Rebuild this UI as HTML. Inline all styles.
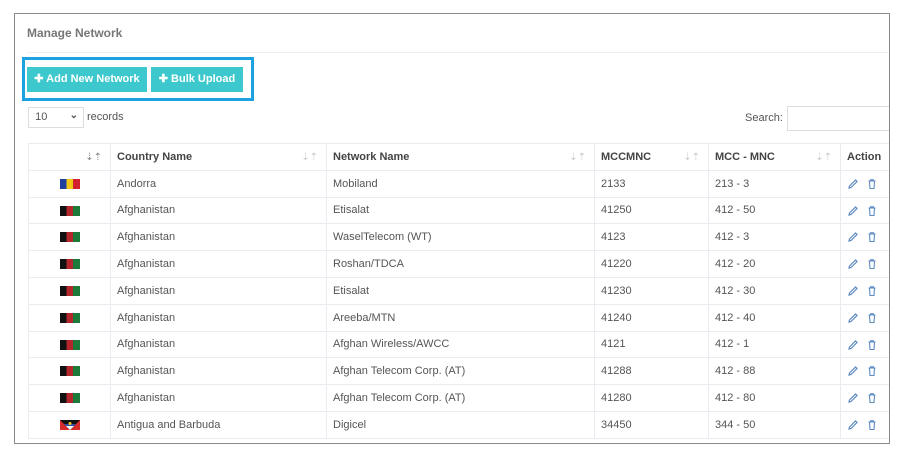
<!DOCTYPE html>
<html><head><style>
body{margin:0;width:898px;height:456px;background:#fff;font-family:"Liberation Sans",sans-serif;position:relative;overflow:hidden;color:#555}
.frame{position:absolute;left:14px;top:13px;width:874px;height:429px;border:1px solid #8a8a8a}
.title{position:absolute;left:27px;top:26px;font-size:12px;font-weight:bold;color:#777}
.sep{position:absolute;left:27px;top:52px;width:861px;height:1px;background:#eee}
.hl{position:absolute;left:22px;top:57px;width:226px;height:38px;border:3px solid #1aa3e0}
.btn{position:absolute;top:67px;height:25px;background:#3cc8cc;color:#fff;font-size:11px;font-weight:bold;line-height:25px;text-align:center}
.sel{position:absolute;left:28px;top:107px;width:54px;height:19px;border:1px solid #ddd;font-size:11px;line-height:19px;color:#555}
.wrap{position:absolute;left:28px;top:143px;width:861px;height:300px;overflow:hidden}
table{border-collapse:collapse;font-size:11px;table-layout:fixed;width:870px}
td,th{border:1px solid #e8ecf0;height:25.8px;padding:0 6px;text-align:left;white-space:nowrap;overflow:hidden}
th{color:#444;font-weight:bold;position:relative}
th .s{position:absolute;right:8px;top:8px;color:#ccc;font-size:10px;font-weight:normal}
.flag{display:inline-block;width:20px;height:10px;vertical-align:middle}
.af{background:linear-gradient(90deg,#111 33%,#b3262b 33% 66%,#1c7a3a 66%)}
.ad{background:linear-gradient(90deg,#1d3f9e 33%,#f2c718 33% 66%,#d3202e 66%)}
td svg{vertical-align:middle}
</style></head><body>
<div class="frame"></div>
<div class="title">Manage Network</div>
<div class="sep"></div>
<div class="hl"></div>
<div class="btn" style="left:27px;width:120px">✚ Add New Network</div>
<div class="btn" style="left:151px;width:92px">✚ Bulk Upload</div>
<div class="sel">&nbsp;&nbsp;10<span style="position:absolute;right:5px;top:-2px;font-size:10px;font-weight:bold">⌄</span></div>
<div style="position:absolute;left:87px;top:111px;font-size:11px">records</div>
<div style="position:absolute;left:745px;top:112px;font-size:11px">Search:</div>
<div style="position:absolute;left:787px;top:106px;width:101px;height:23px;border:1px solid #ddd;border-right:none"></div>
<div class="wrap">
<table>
<colgroup><col style="width:82px"><col style="width:216px"><col style="width:268px"><col style="width:114px"><col style="width:132px"><col style="width:58px"></colgroup>
<tr><th><span class="s" style="color:#888">⇣⇡</span></th><th>Country Name<span class="s">⇣⇡</span></th><th>Network Name<span class="s">⇣⇡</span></th><th>MCCMNC<span class="s">⇣⇡</span></th><th>MCC - MNC<span class="s">⇣⇡</span></th><th>Action</th></tr>
</table>
</div>
<script>
var rows=[["ad","Andorra","Mobiland","2133","213 - 3"],["af","Afghanistan","Etisalat","41250","412 - 50"],["af","Afghanistan","WaselTelecom (WT)","4123","412 - 3"],["af","Afghanistan","Roshan/TDCA","41220","412 - 20"],["af","Afghanistan","Etisalat","41230","412 - 30"],["af","Afghanistan","Areeba/MTN","41240","412 - 40"],["af","Afghanistan","Afghan Wireless/AWCC","4121","412 - 1"],["af","Afghanistan","Afghan Telecom Corp. (AT)","41288","412 - 88"],["af","Afghanistan","Afghan Telecom Corp. (AT)","41280","412 - 80"],["ag","Antigua and Barbuda","Digicel","34450","344 - 50"]];
var icons='<svg width="12" height="12" viewBox="0 0 12 12"><path d="M2 10 L2.5 8 L8.5 2 L10 3.5 L4 9.5 Z" fill="none" stroke="#5a8ac0" stroke-width="1.2"/></svg> <svg width="12" height="12" viewBox="0 0 12 12" style="margin-left:4px"><path d="M2.5 3 H9.5 M4.5 3 V1.8 H7.5 V3 M3.5 3 L4 10.5 H8 L8.5 3" fill="none" stroke="#5a8ac0" stroke-width="1.1"/></svg>';
var agf='<svg class="flag" viewBox="0 0 20 10"><rect width="20" height="10" fill="#d52b2b"/><path d="M0 0 H20 L10 10 Z" fill="#111"/><path d="M4 4 H16 L10 10 Z" fill="#2d4fa8"/><path d="M6 6 H14 L10 10 Z" fill="#fff"/><circle cx="10" cy="3.5" r="1.5" fill="#f2c718"/></svg>';
var t=document.querySelector('table'),h='';
rows.forEach(function(r){h+='<tr><td style="text-align:center">'+(r[0]=='ag'?agf:'<span class="flag '+r[0]+'"></span>')+'</td><td>'+r[1]+'</td><td>'+r[2]+'</td><td>'+r[3]+'</td><td>'+r[4]+'</td><td>'+icons+'</td></tr>';});
t.insertAdjacentHTML('beforeend',h);
</script>
</body></html>
